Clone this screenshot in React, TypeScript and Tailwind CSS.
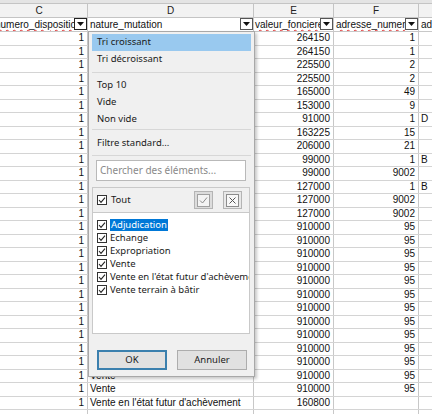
import * as React from "react"

const rows: [string, string, string, string][] = [
  ["", "264150", "1", ""],
  ["", "264150", "1", ""],
  ["", "225500", "2", ""],
  ["", "225500", "2", ""],
  ["", "165000", "49", ""],
  ["", "153000", "9", ""],
  ["", "91000", "1", "D"],
  ["", "163225", "15", ""],
  ["", "206000", "21", ""],
  ["", "99000", "1", "B"],
  ["", "99000", "9002", ""],
  ["", "127000", "1", "B"],
  ["", "127000", "9002", ""],
  ["", "127000", "9002", ""],
  ...Array.from({ length: 11 }, () => ["", "910000", "95", ""] as [string, string, string, string]),
  ["Vente", "910000", "95", ""],
  ["Vente", "910000", "95", ""],
  ["Vente en l'état futur d'achèvement", "160800", "", ""],
]

const items = [
  "Adjudication",
  "Echange",
  "Expropriation",
  "Vente",
  "Vente en l'état futur d'achèvement",
  "Vente terrain à bâtir",
]

function FilterButton({ dark }: { dark?: boolean }) {
  return (
    <div
      className={
        "h-[12px] w-[13px] shrink-0 border bg-white flex items-center justify-center " +
        (dark ? "border-[#222]" : "border-[#555]")
      }
    >
      <svg width="7" height="4" viewBox="0 0 7 4">
        <polygon points="0,0 7,0 3.5,4" fill="#111" />
      </svg>
    </div>
  )
}

function Check() {
  return (
    <svg width="10" height="10" viewBox="0 0 10 10" className="shrink-0">
      <rect x="0.5" y="0.5" width="9" height="9" fill="#fff" stroke="#333" />
      <polyline points="2,5 4,7.3 8,2.6" fill="none" stroke="#222" strokeWidth="1.1" />
    </svg>
  )
}

export default function App() {
  const cell = "border-r border-[#c8c8c8] overflow-hidden whitespace-nowrap"
  return (
    <div
      className="relative w-[432px] h-[414px] overflow-hidden bg-white text-[10px] text-[#111]"
      style={{ fontFamily: '"Liberation Sans", Arial, sans-serif' }}
    >
      <div className="h-[4px] bg-[#e4e4e4] border-b border-[#c4c4c4]" />
      {/* column letters */}
      <div className="flex h-[14px] bg-[#f2f2f2] border-b border-[#c4c4c4] leading-[13px] text-[#222]">
        <div className="w-[88px] border-r border-[#c4c4c4] text-center pr-[9px]">C</div>
        <div className="w-[166px] border-r border-[#c4c4c4] text-center">D</div>
        <div className="w-[80px] border-r border-[#c4c4c4] text-center">E</div>
        <div className="w-[85px] border-r border-[#c4c4c4] text-center">F</div>
        <div className="flex-1" />
      </div>
      {/* field names */}
      <div className="flex h-[14px] border-b border-[#c8c8c8] leading-[13px]">
        <div className={"w-[88px] flex items-start " + cell}>
          <span className="flex-1 overflow-hidden -ml-[5px] underline decoration-wavy decoration-[#e03030] decoration-1 underline-offset-[1px]">
            numero_disposition
          </span>
          <FilterButton dark />
        </div>
        <div className={"w-[166px] flex items-start " + cell}>
          <span className="flex-1 overflow-hidden pl-[2px]">nature_mutation</span>
          <FilterButton />
        </div>
        <div className={"w-[80px] flex items-start " + cell}>
          <span className="flex-1 overflow-hidden pl-[1px] underline decoration-wavy decoration-[#e03030] decoration-1 underline-offset-[1px]">
            valeur_fonciere
          </span>
          <FilterButton />
        </div>
        <div className={"w-[85px] flex items-start " + cell}>
          <span className="flex-1 overflow-hidden pl-[2px] underline decoration-wavy decoration-[#e03030] decoration-1 underline-offset-[1px]">
            adresse_numero
          </span>
          <FilterButton />
        </div>
        <div className="flex-1 pl-[2px] overflow-hidden whitespace-nowrap">ad</div>
      </div>
      {/* data rows */}
      {[...rows, ["", "", "", ""] as [string, string, string, string]].map((r, i) => (
        <div
          key={i}
          className={
            "flex border-b border-[#d4d4d4] leading-[12px] " + (i % 2 === 0 ? "h-[14px]" : "h-[13px]")
          }
        >
          <div className={"w-[88px] text-right pr-[3px] " + cell}>{i < 28 ? "1" : ""}</div>
          <div className={"w-[166px] pl-[2px] " + cell}>{r[0]}</div>
          <div className={"w-[80px] text-right pr-[3px] " + cell}>{r[1]}</div>
          <div className={"w-[85px] text-right pr-[3px] " + cell}>{r[2]}</div>
          <div className="flex-1 pl-[2px]">{r[3]}</div>
        </div>
      ))}

      {/* autofilter popup */}
      <div
        className="absolute left-[88px] top-[31px] w-[167px] border border-[#a8a8a8] bg-[#f0f0f0] shadow-[2px_2px_3px_rgba(0,0,0,0.22)] px-[3px] pt-[2px] pb-[6px] flex flex-col text-[9.5px] text-[#1a1a1a]"
        style={{ fontFamily: '"Noto Sans", "Open Sans", sans-serif' }}
      >
        <div className="h-[17px] bg-[#99c9ef] pl-[5px] flex items-center">Tri croissant</div>
        <div className="h-[17px] pl-[5px] flex items-center">Tri décroissant</div>
        <div className="mt-[4px] h-px bg-[#d7d7d7]" />
        <div className="mt-[4px] h-[17px] pl-[5px] flex items-center">Top 10</div>
        <div className="h-[17px] pl-[5px] flex items-center">Vide</div>
        <div className="h-[17px] pl-[5px] flex items-center">Non vide</div>
        <div className="mt-[1px] h-px bg-[#d7d7d7]" />
        <div className="mt-[5px] h-[17px] pl-[5px] flex items-center">Filtre standard...</div>
        <div className="mt-[3px] h-px bg-[#d7d7d7]" />
        <div className="mt-[4px] ml-[4px] w-[150px] h-[21px] border border-[#b9b9b9] bg-white pl-[3px] flex items-center text-[#8a8a8a] text-[10px]">
          Chercher des éléments...
        </div>
        <div className="mt-[6px] w-[158px] h-[147px] border border-[#c9c9c9] flex flex-col">
          <div className="h-[25px] flex items-center pl-[4px] border-b border-[#c9c9c9]">
            <Check />
            <span className="ml-[4px]">Tout</span>
            <div className="ml-auto w-[19px] h-[18px] border border-[#b4b4b4] bg-[#dcdcdc] flex items-center justify-center">
              <svg width="13" height="13" viewBox="0 0 13 13">
                <rect x="0.5" y="0.5" width="12" height="12" fill="#f4f4f4" stroke="#a0a0a0" />
                <polyline points="3,6.5 5.5,9 10,3.5" fill="none" stroke="#8c8c8c" strokeWidth="1" />
              </svg>
            </div>
            <div className="ml-[10px] mr-[7px] w-[19px] h-[18px] border border-[#b4b4b4] bg-[#e8e8e8] flex items-center justify-center">
              <svg width="13" height="13" viewBox="0 0 13 13">
                <rect x="0.5" y="0.5" width="12" height="12" fill="#f8f8f8" stroke="#8c8c8c" />
                <path d="M3.5 3.5 L9.5 9.5 M9.5 3.5 L3.5 9.5" stroke="#555" strokeWidth="1" />
              </svg>
            </div>
          </div>
          <div className="flex-1 bg-white pt-[5px] pl-[4px] overflow-hidden">
            {items.map((t, i) => (
              <div key={t} className="h-[13px] flex items-center whitespace-nowrap">
                <Check />
                <span className={"ml-[3px] leading-[12px] " + (i === 0 ? "bg-[#0078d7] text-white px-px" : "")}>
                  {t}
                </span>
              </div>
            ))}
          </div>
        </div>
        <div className="mt-[16px] flex pl-[5px] gap-[10px]">
          <div className="w-[70px] h-[20px] border-2 border-[#3b80ae] bg-[#e1e1e1] flex items-center justify-center">
            OK
          </div>
          <div className="w-[70px] h-[20px] border border-[#adadad] bg-[#e1e1e1] flex items-center justify-center">
            Annuler
          </div>
        </div>
      </div>
    </div>
  )
}
